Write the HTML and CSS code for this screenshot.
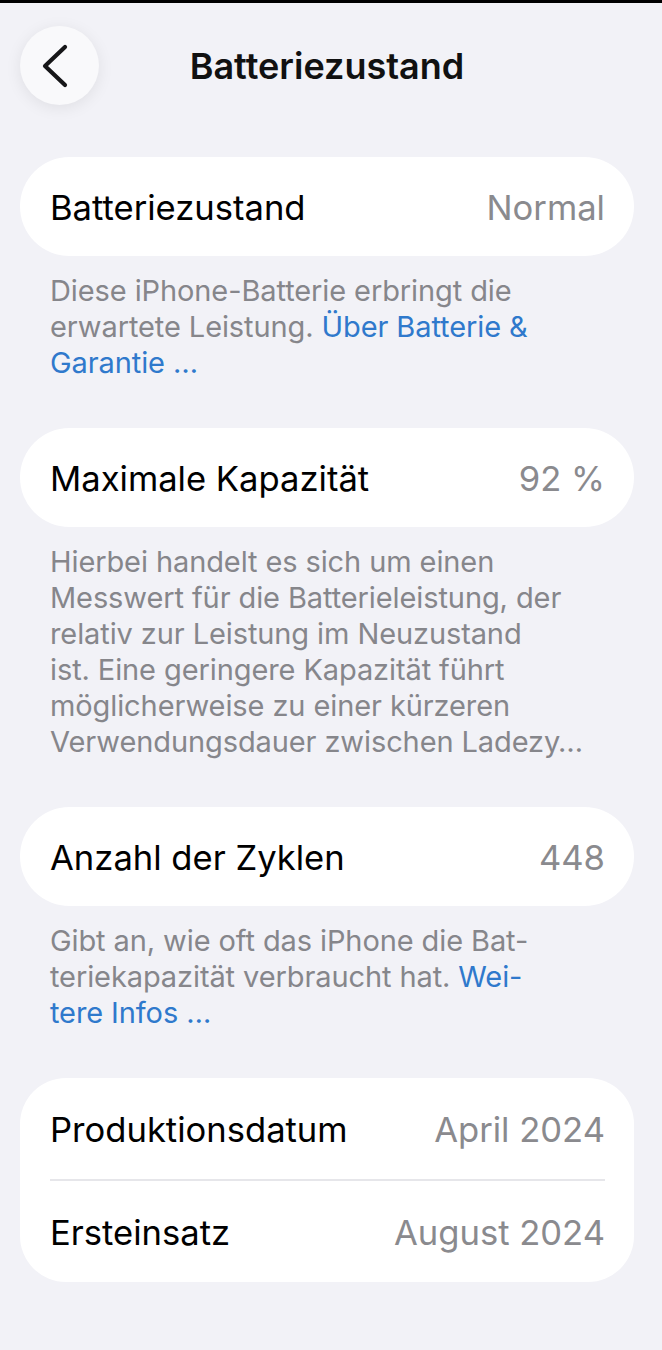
FILE: index.html
```html
<!DOCTYPE html>
<html lang="de">
<head>
<meta charset="utf-8">
<title>Batteriezustand</title>
<link rel="stylesheet" href="styles.css">
</head>
<body>
<div class="screen">
  <header class="nav">
    <div class="nav-left">
      <button class="back" aria-label="Zurück">
        <svg width="30" height="44" viewBox="0 0 30 44" aria-hidden="true">
          <path d="M23 3 L3 22 L23 41" fill="none" stroke="#161618" stroke-width="4.2" stroke-linecap="round" stroke-linejoin="round"/>
        </svg>
      </button>
    </div>
    <h1 class="title">Batteriezustand</h1>
    <div class="nav-right"></div>
  </header>

  <main class="content">
    <section class="group">
      <div class="card">
        <div class="row"><span class="label">Batteriezustand</span><span class="value">Normal</span></div>
      </div>
      <p class="footnote">Diese iPhone-Batterie erbringt die<br>erwartete Leistung. <a class="link" href="#">Über Batterie &amp;<br>Garantie …</a></p>
    </section>

    <section class="group">
      <div class="card">
        <div class="row"><span class="label">Maximale Kapazität</span><span class="value">92 %</span></div>
      </div>
      <p class="footnote">Hierbei handelt es sich um einen<br>Messwert für die Batterieleistung, der<br>relativ zur Leistung im Neuzustand<br>ist. Eine geringere Kapazität führt<br>möglicherweise zu einer kürzeren<br>Verwendungsdauer zwischen Ladezy…</p>
    </section>

    <section class="group">
      <div class="card">
        <div class="row"><span class="label">Anzahl der Zyklen</span><span class="value">448</span></div>
      </div>
      <p class="footnote">Gibt an, wie oft das iPhone die Bat-<br>teriekapazität verbraucht hat. <a class="link" href="#">Wei-<br>tere Infos …</a></p>
    </section>

    <section class="group">
      <div class="card card-multi">
        <div class="row"><span class="label">Produktionsdatum</span><span class="value">April 2024</span></div>
        <div class="divider"></div>
        <div class="row"><span class="label">Ersteinsatz</span><span class="value">August 2024</span></div>
      </div>
    </section>
  </main>
</div>
</body>
</html>
```

FILE: styles.css
```css
* { box-sizing: border-box; }

html, body {
  margin: 0;
  padding: 0;
  background: #f2f2f7;
}

body {
  font-family: "Inter", "Liberation Sans", sans-serif;
  color: #000;
  -webkit-font-smoothing: antialiased;
}

.screen {
  width: 662px;
  min-height: 1350px;
  border-top: 3px solid #000;
  background: #f2f2f7;
}

.nav {
  display: grid;
  grid-template-columns: 1fr auto 1fr;
  align-items: center;
  padding: 22px 20px 0;
  height: 103px;
}

.back {
  width: 79px;
  height: 79px;
  border-radius: 50%;
  border: none;
  background: #f9f9fb;
  box-shadow: 0 3px 16px rgba(0, 0, 0, 0.08);
  display: flex;
  align-items: center;
  justify-content: center;
  padding: 0 6px 0 0;
}

.title {
  margin: 0;
  font-size: 36px;
  font-weight: 600;
  letter-spacing: 0;
  color: #111;
  transform: translateX(-4px);
}

.content {
  padding: 51px 28px 0 20px;
}

.group {
  margin-bottom: 47px;
}

.card {
  background: #fff;
  border-radius: 50px;
  padding: 0 29px 0 30px;
}

.card-multi {
  border-radius: 46px;
}

.row {
  height: 99px;
  display: flex;
  align-items: center;
  justify-content: space-between;
  font-size: 34.6px;
  letter-spacing: 0;
}

.card-multi .row {
  height: 101px;
}

.label {
  color: #000;
}

.value {
  color: #8a8a8e;
}

.divider {
  height: 2px;
  background: #e6e6ea;
}

.footnote {
  margin: 17px 0 0;
  padding: 0 30px;
  font-size: 29px;
  line-height: 36px;
  color: #86868b;
  letter-spacing: -0.1px;
}

.link {
  color: #2f79cc;
  text-decoration: none;
}
```
